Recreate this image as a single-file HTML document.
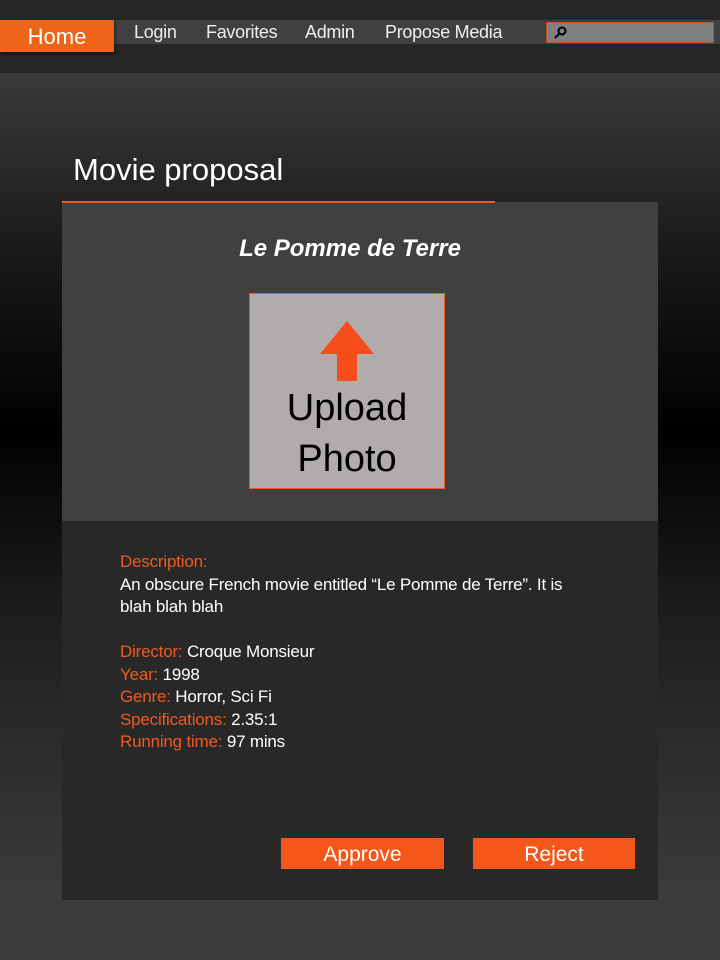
<!DOCTYPE html>
<html><head><style>
body{margin:0;width:720px;height:960px;overflow:hidden;font-family:"Liberation Sans",sans-serif;position:relative;
background:linear-gradient(#262626 0,#262626 73px,#3a3a3a 73px,#1a1a1a 250px,#000 430px,#1e1e1e 620px,#3c3c3c 900px,#3c3c3c 960px);}
.a{position:absolute}
.nav{left:114px;top:20px;width:606px;height:24px;background:#404040}
.nav span{position:absolute;top:2px;color:#eee;font-size:18px;letter-spacing:-0.3px}
.home{left:0;top:20px;width:114px;height:32px;background:#ec6519;color:#fff;font-size:22px;text-align:center;line-height:34px;box-shadow:1px 2px 3px rgba(0,0,0,.6)}
.search{left:546px;top:22px;width:166px;height:19px;background:#808080;border:1px solid #c8561a;border-radius:2px}
.lbl{color:#f05a1e}
.btn{background:#f5561a;color:#fff;font-size:21px;text-align:center;line-height:33px;height:31px;top:838px}
</style></head><body>
<div class="a nav">
<span style="left:20px">Login</span><span style="left:92px">Favorites</span><span style="left:191px">Admin</span><span style="left:271px">Propose Media</span>
</div>
<div class="a home">Home</div>
<div class="a search"><svg width="14" height="14" style="position:absolute;left:6px;top:3px"><circle cx="9" cy="5" r="3.5" fill="none" stroke="#000" stroke-width="2"/><line x1="6.5" y1="7.5" x2="2" y2="12" stroke="#000" stroke-width="2"/></svg></div>
<div class="a" style="left:73px;top:152px;color:#fff;font-size:31px">Movie proposal</div>
<div class="a" style="left:62px;top:202px;width:596px;height:319px;background:#404040"></div>
<div class="a" style="left:62px;top:521px;width:596px;height:379px;background:#282828"></div>
<div class="a" style="left:62px;top:201px;width:433px;height:2px;background:#f05a1e"></div>
<div class="a" style="left:62px;top:235px;width:576px;text-align:center;color:#fff;font-size:24px;font-weight:bold;font-style:italic">Le Pomme de Terre</div>
<div class="a" style="left:249px;top:293px;width:194px;height:194px;background:#b0acab;border:1px solid #f05a1e"></div>
<svg class="a" style="left:0;top:0" width="720" height="960"><polygon points="347,321 374,354 357,354 357,381 337,381 337,354 320,354" fill="#f64e1a"/></svg>
<div class="a" style="left:249px;top:383px;width:196px;text-align:center;color:#000;font-size:38px;line-height:51px">Upload<br>Photo</div>
<div class="a" style="left:120px;top:551px;width:500px;color:#fff;font-size:17px;line-height:22.5px;letter-spacing:-0.2px">
<span class="lbl">Description:</span><br>An obscure French movie entitled “Le Pomme de Terre”. It is<br>blah blah blah<br><br>
<span class="lbl">Director:</span> Croque Monsieur<br>
<span class="lbl">Year:</span> 1998<br>
<span class="lbl">Genre:</span> Horror, Sci Fi<br>
<span class="lbl">Specifications:</span> 2.35:1<br>
<span class="lbl">Running time:</span> 97 mins</div>
<div class="a btn" style="left:281px;width:163px">Approve</div>
<div class="a btn" style="left:473px;width:162px">Reject</div>
</body></html>
